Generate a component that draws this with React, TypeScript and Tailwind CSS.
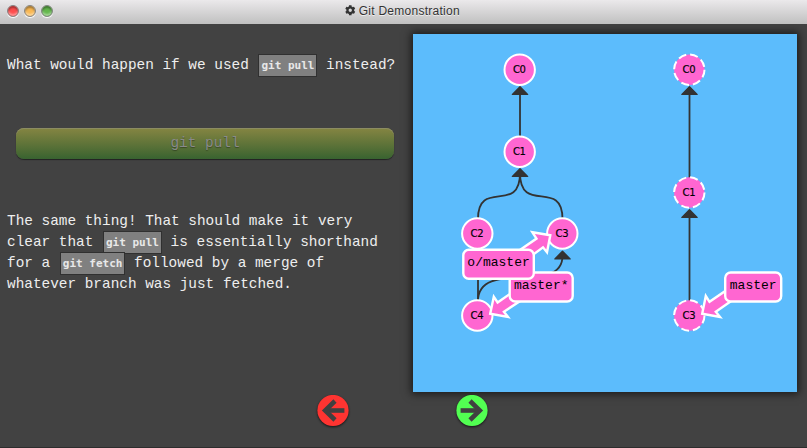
import type { ReactNode } from "react";
import { FaCog } from "react-icons/fa";

const PINK = "#ff66d1";
const INK = "#333333";

function Code({ children }: { children: ReactNode }) {
  return (
    <code className="relative mr-px inline-block h-[23px] translate-x-px border border-[#303030] bg-[#808080] px-[2px] align-top font-['DejaVu_Sans_Mono',monospace] text-[11px] leading-[22px] font-bold text-[#e8e8e8]">
      {children}
    </code>
  );
}

function Light({ className }: { className: string }) {
  return (
    <span
      className={`h-3 w-3 rounded-full border border-[#858585] shadow-[0_1px_1px_#ffffff,inset_0_2px_2px_rgba(0,0,0,0.35),inset_0_-2px_2px_rgba(255,255,255,0.4)] ${className}`}
    />
  );
}

function Commit({ x, y, label, remote = false }: { x: number; y: number; label: string; remote?: boolean }) {
  return (
    <g>
      <circle cx={x} cy={y} r={15.2} fill={PINK} stroke="#fff" strokeWidth={2} strokeDasharray={remote ? "8 4" : undefined} />
      <text x={x - 0.3} y={y + 3.5} textAnchor="middle" textLength={13} fontSize={10} fill="#000" stroke="#000" strokeWidth={0.15} className="font-['DejaVu_Sans',sans-serif]">
        {label}
      </text>
    </g>
  );
}

function Head({ x, y }: { x: number; y: number }) {
  return <path d={`M${x} ${y + 0.8}l7.6 7.6h-15.2z`} fill={INK} stroke={INK} strokeWidth={1.4} strokeLinejoin="round" />;
}

function Tag({ x, y, w, label, arrow }: { x: number; y: number; w: number; label: string; arrow: string }) {
  return (
    <g fill={PINK} stroke="#fff" strokeWidth={2.4}>
      <path d={arrow} />
      <rect x={x} y={y} width={w} height={29} rx={5.5} />
      <text x={x + w / 2} y={y + 16.5} textAnchor="middle" fontSize={13} fill="#000" stroke="none" className="font-['Liberation_Mono',monospace]">
        {label}
      </text>
    </g>
  );
}

function Tree() {
  return (
    <svg viewBox="413 34 384 358" className="block h-[358px] w-[384px]">
      <g fill="none" stroke={INK} strokeWidth={1.8}>
        <path d="M520 137V92" />
        <path d="M478 219C478 178 520 215 520 173" />
        <path d="M562.5 219C562.5 178 520 215 520 173" />
        <path d="M478 301V249" />
        <path d="M478 301C478 258 562.5 296 562.5 256" />
        <path d="M689.5 178V92" />
        <path d="M689.5 301V215" />
      </g>
      <Head x={520} y={86} />
      <Head x={520} y={168} />
      <Head x={562.5} y={250.5} />
      <Head x={689.5} y={86} />
      <Head x={689.5} y={209} />
      <Commit x={519.7} y={69.7} label="C0" />
      <Commit x={519.7} y={151.7} label="C1" />
      <Commit x={477.3} y={233.5} label="C2" />
      <Commit x={562.3} y={233.5} label="C3" />
      <Commit x={477.3} y={315.5} label="C4" />
      <Commit x={689.3} y={69.7} label="C0" remote />
      <Commit x={689.3} y={192.5} label="C1" remote />
      <Commit x={689.3} y={315.5} label="C3" remote />
      <Tag x={509.7} y={272.5} w={63} label="master*" arrow="M490.2 313.8L493.8 296.7L497.6 302.5L530 280L537 290L503.9 311.7L508 317Z" />
      <Tag x={463.3} y={249.7} w={70.5} label="o/master" arrow="M550.3 235.2L532.3 232.2L536.5 238.6L504 261L511 271L543 247.3L547 252.3Z" />
      <Tag x={725.2} y={272.5} w={56} label="master" arrow="M702.2 313.8L705.8 296L709.5 301.8L740 281L747 290L715.8 311.7L720 317Z" />
    </svg>
  );
}

function NavButton({ left = false }: { left?: boolean }) {
  return (
    <button type="button" className="h-8 w-8 drop-shadow-[0_1px_1px_rgba(0,0,0,0.7)]">
      <svg viewBox="0 0 32 32" className="block h-8 w-8">
        <circle cx="16" cy="15.5" r="15.6" fill={left ? "#ff3431" : "#52ff52"} />
        <g transform={left ? undefined : "translate(32 0) scale(-1 1)"} fill="none" stroke="#404040">
          <path d="M27.4 15.5H8" strokeWidth="4.6" />
          <path d="M18 6L8.2 15.5L18 25" strokeWidth="4.6" />
        </g>
      </svg>
    </button>
  );
}

export default function App() {
  return (
    <div className="flex h-[448px] w-[807px] flex-col overflow-hidden border-b border-[#2d2d2d] bg-[#424242]">
      <header className="relative flex h-6 shrink-0 items-center bg-linear-to-b from-[#ebe9eb] to-[#c0c0c0]">
        <div className="flex gap-[5px] pb-[3px] pl-[6.5px]">
          <Light className="bg-[#ff4d4d]" />
          <Light className="bg-[#fab954]" />
          <Light className="bg-[#65b84e]" />
        </div>
        <div className="absolute inset-x-0 top-0 flex h-[21px] items-center justify-center gap-[3px] pr-[2px] font-['Liberation_Sans',sans-serif] text-xs text-[#333] text-shadow-[0_1px_0_#eee]">
          <FaCog size={10.5} />
          <span className="tracking-[0.26px]">Git Demonstration</span>
        </div>
      </header>
      <main className="flex h-[368px] shrink-0">
        <section className="w-[413px] font-['Liberation_Mono',monospace] text-[14.4px] leading-[23px] whitespace-nowrap text-[#eeeeee]">
          <p className="mt-[30px] h-[21px] pl-[7px]">
            What would happen if we used <Code>git pull</Code> instead?
          </p>
          <div className="mt-[53px] ml-4 h-[31px] w-[378px] rounded-lg bg-linear-to-b from-[#858542] to-[#386330] text-center leading-[31px] text-[#8a8a8a] shadow-[0_1px_1px_#222,inset_0_1px_0_#8c8c62] text-shadow-[0_1px_1px_rgb(0_0_0/0.35)]">
            git pull
          </div>
          <div className="mt-[51px] pl-[7px]">
            <p className="h-[21px]">The same thing! That should make it very</p>
            <p className="h-[21px]">
              clear that <Code>git pull</Code> is essentially shorthand
            </p>
            <p className="h-[21px]">
              for a <Code>git fetch</Code> followed by a merge of
            </p>
            <p className="h-[21px]">whatever branch was just fetched.</p>
          </div>
        </section>
        <section className="mt-2.5 h-[358px] w-[384px] bg-[#5cbcfc] shadow-[0_0_8px_2px_rgba(0,0,0,0.6)]">
          <Tree />
        </section>
      </main>
      <nav className="mt-[3px] flex gap-[107px] pl-[317px]">
        <NavButton left />
        <NavButton />
      </nav>
    </div>
  );
}
